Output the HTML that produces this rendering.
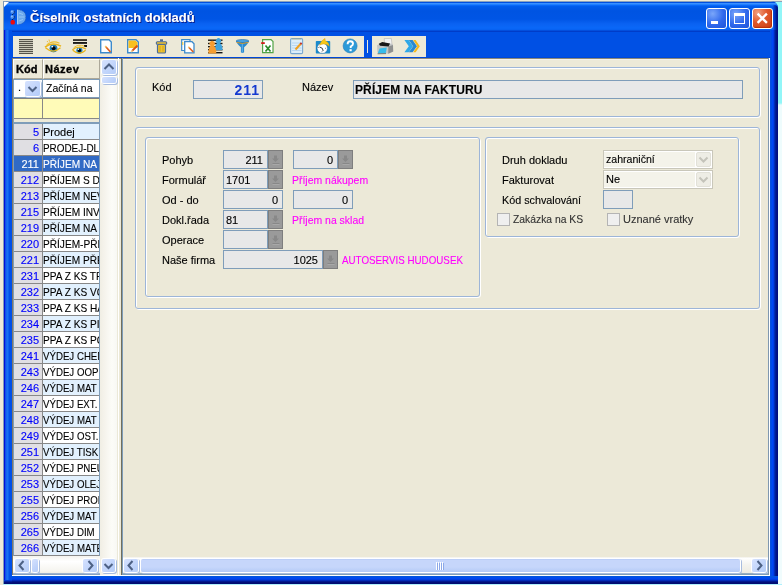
<!DOCTYPE html>
<html><head><meta charset="utf-8">
<style>
*{margin:0;padding:0;box-sizing:border-box}
html,body{will-change:transform;-webkit-text-stroke:0.12px currentColor;width:782px;height:585px;overflow:hidden;background:#ECE9D8;font-family:"Liberation Sans",sans-serif;font-size:11px;color:#000;position:relative}
.a{position:absolute}
#cyan{left:773px;top:1px;width:9px;height:584px;background:linear-gradient(#8AA2BC 0px,#8AA2BC 1px,#92F6F8 1px,#92F6F8 102px,#EEFCFD 104px,#F0FCFD 100%)}
#cyanb{left:3px;top:584px;width:779px;height:1px;background:#B0F0FC}
#topline{left:3px;top:1px;width:779px;height:1px;background:#8AA2BC}
#win{left:3px;top:1px;width:775px;height:583px;background:#0050E4;border-radius:6px 7px 0 0;overflow:hidden}
#title{left:0;top:0;width:775px;height:31px;
 background:linear-gradient(#8AA2BC 0px,#8AA2BC 1px,#0050E0 1px,#0050E0 2px,#3A90FF 2px,#3A90FF 3px,#2080FF 3px,#2080FF 4px,#0868F8 4px,#0868F8 5px,#005EEE 5px,#0058E8 7px,#0054E2 10px,#0055E5 18px,#0A62F2 23px,#0A68F8 27px,#0660F0 29px,#003CC8 30px,#003CC8 31px)}
#lb{left:3px;top:30px;width:9px;height:554px;z-index:1;background:linear-gradient(90deg,#8898C0 0px,#8898C0 1px,#0010D8 1px,#0010D8 2px,#1040E0 2px,#1060F0 3px,#1870F0 4.5px,#0A60F0 5.5px,#0050E8 6.5px,#0050E8 9px)}
#rb{left:770px;top:30px;width:8px;height:554px;background:linear-gradient(90deg,#1050E0 0px,#0050E0 1px,#0048F0 2px,#0044F8 3px,#0038D0 4px,#0020A0 5px,#001890 6px,#000C80 7px,#000C80 8px)}
#bb{left:12px;top:576px;width:766px;height:8px;background:linear-gradient(#0058E0 0px,#0050E0 1px,#0048F0 2px,#0044F0 3px,#0038D0 4px,#0020A0 5px,#001080 6px,#000C70 7px,#000C70 8px)}
#ttext{left:30px;top:10px;color:#fff;font-weight:bold;font-size:13px;white-space:nowrap;text-shadow:1px 1px 0 #0A1E8A;letter-spacing:0px}
.tbtn{top:8px;width:21px;height:21px;border:1px solid #fff;border-radius:3px;background:radial-gradient(circle at 30% 25%,#7AA6FA,#2F68EC 55%,#1E54D8)}
#bclose{background:radial-gradient(circle at 25% 20%,#F0A080,#E0582A 45%,#C83C12);box-shadow:inset -1px -1px 1px #B83008}
.tband{top:36px;height:21px;background:#ECE9D8}
#grip{left:367px;top:40px;width:1px;height:13px;background:#ECE9D8}
/* grid */
.hd{-webkit-text-stroke:0.35px #000;top:59px;height:20px;background:#ECE9D8;border-top:1px solid #fff;border-left:1px solid #fff;border-bottom:1px solid #ACA899;border-right:1px solid #ACA899;font-weight:bold;padding:3px 0 0 3px;line-height:13px}
.gr{left:13px;width:87px;height:16px;border-bottom:1px solid #888;border-left:1px solid #7F9DB9}
.gk{left:0;top:0;width:29px;height:15px;background:#E0DFE3;color:#0000FF;text-align:right;padding-right:3px;line-height:17px;border-right:1px solid #888}
.gn{left:29px;top:0;width:57px;height:15px;line-height:17px;padding-left:0px;white-space:nowrap;overflow:hidden}
.gr.b .gn{background:#E2F1FE}
.gr.w .gn{background:#fff}
.gr.sel .gk,.gr.sel .gn{background:#316AC5;color:#fff}
.sbtn{border-radius:2px;background:linear-gradient(135deg,#D6E2FE,#C2D5FB 55%,#B4CCF8);box-shadow:0 0 0 1px #fff,1px 1px 0 1px #A8BCDF}
/* form */
.gb{border:1px solid #9DB5D8;border-radius:3px}
.gbw{border:1px solid #fff;border-radius:3px}
.lbl{white-space:nowrap;line-height:13px}
.ed{height:19px;background:#E8E8E8;border:1px solid #7F9DB9;line-height:19px;padding:0 4px;white-space:nowrap;overflow:hidden}
.edb{height:19px;background:#9A9A9A;border:1px solid #7E7E7E}
.edb svg{position:absolute;left:0;top:0}
.mag{color:#FF00FF;white-space:nowrap;line-height:13px}
.cb{height:19px;background:#F4F3EA;border:1px solid #C9C7BA;line-height:17px;padding:0 2px;white-space:nowrap;box-shadow:inset -1px 0 0 #fff,inset 0 1px 0 #fff,inset 0 -1px 0 #fff}
.cbb{position:absolute;right:0px;top:1px;width:17px;height:15px;background:#fff;padding:0 1px 0 1px}
.cbb div{width:15px;height:15px;border:1px solid #E2E1D8;border-radius:2px;background:#EEEDE5}
.chk{width:13px;height:13px;border:1px solid #B4B4B4;background:#EFEFEF}

.u{display:inline-block;transform:scaleX(.92);transform-origin:0 50%}
.m{display:inline-block;transform:scaleX(.95);transform-origin:0 50%}
.mr{display:inline-block;transform:scaleX(.95);transform-origin:100% 50%}

</style></head><body>
<div class="a" id="cyan"></div>
<div class="a" id="cyanb"></div>
<div class="a" id="topline"></div>
<div class="a" id="win">
  <div class="a" id="title"></div>
</div>
<div class="a" id="lb"></div>
<div class="a" id="rb"></div>
<div class="a" style="left:770px;top:5px;width:8px;height:25px;background:linear-gradient(90deg,rgba(0,0,0,0) 0px,rgba(0,0,0,0) 3px,rgba(0,40,180,0.5) 4px,rgba(0,20,140,0.8) 6px,rgba(0,12,128,0.95) 7px);border-top-right-radius:4px"></div>
<div class="a" id="bb"></div>
<div class="a" style="left:4px;top:580px;width:8px;height:4px;z-index:2;background:linear-gradient(#0038D0 0px,#0038D0 1px,#0020A0 1px,#0020A0 2px,#001080 2px,#001080 3px,#000C70 3px)"></div>
<svg class="a" style="left:3px;top:1px" width="8" height="8"><path d="M1 1 H6 L1 6Z" fill="#fff"/></svg>
<div class="a" style="left:3px;top:1px;width:1px;height:583px;background:#7E9AB8;z-index:3"></div>
<div class="a" id="ttext">Číselník ostatních dokladů</div>
<div class="a tbtn" style="left:706px"></div>
<div class="a tbtn" style="left:729px"></div>
<div class="a tbtn" id="bclose" style="left:752px"></div>
<svg class="a" style="left:0;top:0" width="782" height="32">
<rect x="711" y="21" width="7" height="3" fill="#fff"/>
<path d="M734 13 H745 V24 H734Z M735 16 V23 H744 V16Z" fill="#fff" fill-rule="evenodd"/>
<path d="M757.6 13.6 L766.9 22.9 M766.9 13.6 L757.6 22.9" stroke="#fff" stroke-width="2.3"/>
<g>
<circle cx="12.4" cy="12" r="2.1" fill="#4A8CEC"/><circle cx="11.9" cy="11.4" r="0.9" fill="#8EC0FF"/>
<path d="M14.3 11 Q14.8 12.5 13.5 14" stroke="#102050" stroke-width="0.7" fill="none"/>
<circle cx="12.4" cy="17" r="2.1" fill="#4A8CEC"/><circle cx="11.9" cy="16.4" r="0.9" fill="#8EC0FF"/>
<path d="M14.3 16 Q14.8 17.5 13.5 19" stroke="#102050" stroke-width="0.7" fill="none"/>
<path d="M12 14.3 L13 14.8 M12 19.3 L13 19.8" stroke="#101830" stroke-width="0.8"/>
<rect x="10.6" y="20" width="4.3" height="4.5" rx="1.6" fill="#F00A0A"/>
<path d="M17.3 9.5 Q25.8 10 25.8 17 Q25.8 24.2 17.3 24.6Z" fill="#6CA8EC"/>
<path d="M17.3 9.5 Q25.8 10 25.8 17 Q25.8 24.2 17.3 24.6" fill="none" stroke="#3460A8" stroke-width="0.8" stroke-dasharray="1.2 1.3"/>
<path d="M17.6 9.8 V24.3" stroke="#A8D0FA" stroke-width="1"/>
<path d="M19 13 L23 14.5 M19 17 L24.5 17 M19 21 L23 19.5" stroke="#9ACAF8" stroke-width="0.9"/>
</g>
</svg>

<div class="a tband" style="left:13px;width:351px"></div>
<div class="a tband" style="left:372px;width:54px"></div>
<div class="a" id="grip"></div>
<svg class="a" style="left:0;top:0" width="440" height="58" viewBox="0 0 440 58" shape-rendering="auto">
<!-- 1 lines -->
<g fill="#55534A" shape-rendering="crispEdges"><rect x="19" y="39" width="14" height="1"/><rect x="19" y="41" width="14" height="1"/><rect x="19" y="43" width="14" height="1"/><rect x="19" y="45" width="14" height="1"/><rect x="19" y="47" width="14" height="1"/><rect x="19" y="49" width="14" height="1"/><rect x="19" y="51" width="14" height="1"/><rect x="19" y="53" width="14" height="1"/></g>
<g fill="#A8A698" shape-rendering="crispEdges" opacity="0.5"><rect x="19" y="40" width="14" height="1"/><rect x="19" y="42" width="14" height="1"/><rect x="19" y="44" width="14" height="1"/><rect x="19" y="46" width="14" height="1"/><rect x="19" y="48" width="14" height="1"/><rect x="19" y="50" width="14" height="1"/><rect x="19" y="52" width="14" height="1"/></g>
<!-- 2 eye -->
<g>
<path d="M45.5 47.5 Q53 43.5 60.5 47.5 Q53 53 45.5 47.5Z" fill="#F0EEE2"/>
<circle cx="53.5" cy="48.4" r="3.7" fill="#2A86B6"/><circle cx="53.5" cy="48.4" r="3.7" fill="none" stroke="#1A6A98" stroke-width="0.5"/>
<circle cx="53.6" cy="48.3" r="2" fill="#050508"/><circle cx="52.3" cy="46.6" r="0.9" fill="#fff"/>
<path d="M45 47.2 Q52 41.5 61 46.2" fill="none" stroke="#E8B41A" stroke-width="1.5"/>
<path d="M46.5 45.3 Q52 39.8 59.5 43.2" fill="none" stroke="#EEC030" stroke-width="1.1"/>
<path d="M49.5 41.6 L49 39.5 M48 42.3 L47 41" stroke="#E8B41A" stroke-width="0.8"/>
<path d="M45.5 47.8 Q53 54.5 60.5 47.8" fill="none" stroke="#E8B41A" stroke-width="1.3"/>
</g>
<!-- 3 eye + lines -->
<g>
<rect x="73" y="39.2" width="14" height="1.7" fill="#1E1E1E"/><rect x="73" y="42.1" width="14" height="1.7" fill="#050505"/><rect x="84" y="45" width="3" height="2" fill="#101010" shape-rendering="crispEdges"/>
<path d="M72.8 50 Q79.3 46.5 85.6 50 Q79.3 55 72.8 50Z" fill="#F0EEE2"/>
<circle cx="79.4" cy="50.6" r="3.1" fill="#2A86B6"/><circle cx="79.4" cy="50.5" r="1.7" fill="#050508"/><circle cx="78.4" cy="49.2" r="0.7" fill="#fff"/>
<path d="M72.4 49.7 Q78.5 45 86 49" fill="none" stroke="#E8B41A" stroke-width="1.4"/>
<path d="M73.6 47.8 Q78.5 43.5 84.5 46.3" fill="none" stroke="#EEC030" stroke-width="1"/>
<path d="M72.8 50.3 Q79.3 56.2 85.6 50.3" fill="none" stroke="#E8B41A" stroke-width="1.2"/>
</g>
<!-- 4 new doc -->
<g>
<path d="M100.7 39.7 H109 L111.3 42 V52.8 H100.7Z" fill="#fff" stroke="#3C8ACC" stroke-width="1.4"/>
<path d="M106 47 L110.5 52" stroke="#E06020" stroke-width="1.8"/><path d="M105.2 46.2 L106.4 47.4" stroke="#F0C060" stroke-width="1.8"/>
</g>
<!-- 5 edit doc -->
<g>
<path d="M127.7 39.7 H136 L138.3 42 V52.8 H127.7Z" fill="#fff" stroke="#3C8ACC" stroke-width="1.4"/>
<path d="M128.5 40.5 H135.5 L137.5 42.5 V48 H128.5Z" fill="#F8C020"/>
<path d="M132 51 L137.5 45.5" stroke="#D85018" stroke-width="1.8"/><path d="M131 52 L132.5 50.5" stroke="#F0D090" stroke-width="1.5"/>
</g>
<!-- 6 trash -->
<g>
<rect x="157.5" y="44.5" width="8" height="8.5" rx="1" fill="#F2C42C" stroke="#4A6A98" stroke-width="1.2"/>
<rect x="156.3" y="41.7" width="10.4" height="2.6" rx="1" fill="#F2C42C" stroke="#4A6A98" stroke-width="1.1"/>
<rect x="160" y="39.3" width="3" height="2" fill="#4A6A98"/>
<path d="M160 46 V51.5 M163 46 V51.5" stroke="#C89A20" stroke-width="0.8"/>
</g>
<!-- 7 copy doc -->
<g>
<path d="M181.7 39.7 H190 V50.5 H181.7Z" fill="#fff" stroke="#3C8ACC" stroke-width="1.2"/>
<rect x="182.3" y="42" width="1" height="3" fill="#F0C020"/>
<path d="M184.7 41.7 H192 L194 43.7 V52.8 H184.7Z" fill="#fff" stroke="#3C8ACC" stroke-width="1.3"/>
<path d="M189 47.5 L193.3 52" stroke="#E06020" stroke-width="1.7"/><path d="M188.3 46.8 L189.3 47.8" stroke="#F0C060" stroke-width="1.6"/>
</g>
<!-- 8 people lines -->
<g>
<g fill="#141414"><rect x="208" y="39.5" width="14.5" height="1.4"/><rect x="208" y="42.8" width="14.5" height="1.4"/><rect x="208" y="46" width="14.5" height="1.4"/><rect x="208" y="49" width="14.5" height="1.4"/><rect x="208" y="52" width="14.5" height="1.4"/></g>
<path d="M215 50 Q215 45 217 43 A2.6 2.6 0 1 1 220 43 Q222.5 45 222.5 50Z" fill="#3EA2DC"/>
<path d="M208.3 53.5 Q208.5 47.5 210.5 45.5 A2.6 2.6 0 1 1 213.8 45.5 Q216.3 47.5 216.3 53.5Z" fill="#F49C30"/>
</g>
<!-- 9 funnel -->
<g>
<path d="M236 41 Q236.5 43.5 240.9 47.2 V52.3 Q242.5 53.6 244.1 52.3 V47.2 Q248.5 43.5 249 41Z" fill="#2A8AD0"/>
<path d="M242.3 43.5 V52.5" stroke="#6CB8EC" stroke-width="0.9"/>
<ellipse cx="242.5" cy="41" rx="6.4" ry="1.5" fill="#4AA2E0" stroke="#1E6AAC" stroke-width="0.6"/>
<path d="M236.6 42.4 Q242.5 44.6 248.4 42.4" fill="none" stroke="#D89A28" stroke-width="1"/>
</g>
<!-- 10 excel -->
<g>
<path d="M262.6 39.6 H271 L273 41.6 V52.6 H262.6Z" fill="#fff" stroke="#52A448" stroke-width="1.2"/>
<rect x="261.2" y="42.2" width="3.6" height="1.8" fill="#D01818"/>
<path d="M265.5 45.5 L270.5 51.5 M270.5 45.5 L265.5 51.5" stroke="#2A8A2A" stroke-width="1.7"/>
</g>
<!-- 11 notepad -->
<g>
<rect x="290.6" y="38.6" width="12" height="15" rx="1.2" fill="#DCEEFA" stroke="#7AA8D0" stroke-width="1.1"/>
<path d="M292 43 H301.5 M292 45.5 H301.5 M292 48 H301.5 M292 50.5 H301.5" stroke="#A8CCEC" stroke-width="0.7"/>
<path d="M292.5 39 H301" stroke="#C8A040" stroke-width="0.9" stroke-dasharray="1 1"/>
<path d="M295.5 49.5 L301 43.5" stroke="#F0A020" stroke-width="2"/><path d="M300.4 44.1 L301.6 42.9" stroke="#C03030" stroke-width="2"/>
</g>
<!-- 12 clock -->
<g>
<rect x="315.8" y="41" width="14.4" height="12.5" rx="0.8" fill="#1A8ACC"/>
<circle cx="322.3" cy="48.3" r="5.2" fill="#fff" stroke="#0E5E98" stroke-width="0.5"/>
<path d="M322.3 48.3 L319.6 47 M322.3 48.3 L323.2 51" stroke="#202830" stroke-width="0.9"/>
<path d="M318.3 47.5 h0.8 M322 52.2 v-0.8 M326 48.3 h-0.8" stroke="#404850" stroke-width="0.8"/>
<path d="M319.5 45.2 Q320.8 40.6 325 38.4 L325.2 40.8 Q328.6 41.6 329.3 46.2 L326.8 44.6 Q323.6 43 319.5 45.2Z" fill="#F8C818" stroke="#D09808" stroke-width="0.4"/>
</g>
<!-- 13 help -->
<g>
<circle cx="350.1" cy="45.9" r="7" fill="#2C9AD8"/>
<circle cx="350.1" cy="45.9" r="7" fill="none" stroke="#1C78B8" stroke-width="0.6"/>
<path d="M347.6 44.2 Q347.6 41.2 350.3 41.2 Q353 41.2 353 43.7 Q353 45.2 350.7 46.5 V48" fill="none" stroke="#fff" stroke-width="1.9"/>
<rect x="349.5" y="49.2" width="2.2" height="2" fill="#fff"/>
</g>
<!-- 14 printer -->
<g>
<path d="M384.2 38.6 L391.3 38.4 L392 44.3 L384.6 44.6Z" fill="#F2F2F2" stroke="#A8A8A8" stroke-width="0.5"/>
<path d="M377 45.3 L381.5 42.6 L392.8 44 L393.2 51.4 L388.3 53.8 L377.4 52.4Z" fill="#C4C6C6"/>
<path d="M388.3 46.5 L393 45 L393.2 51.4 L388.3 53.8Z" fill="#8E9090"/>
<path d="M378.8 43.8 L382.3 42 L390 43.6 L388.6 46.4 L380 45.8Z" fill="#181818"/>
<path d="M379.6 48.4 L386.8 47.6 L385.8 53.2 L377.6 53.6Z" fill="#36BCEC"/>
<path d="M377.6 53.8 L386 53.6" stroke="#505050" stroke-width="0.7"/>
</g>
<!-- 15 chevrons -->
<g>
<path d="M404.4 40 H408.6 L413 46.2 L408.6 52.3 H404.4 L408.8 46.2Z" fill="#2EA8E8"/>
<path d="M408.8 40 H412.6 L417 46.2 L412.6 52.3 H408.8 L413.2 46.2Z" fill="#2A88D0"/>
<path d="M413.2 40 H415.6 L419.8 46.2 L415.6 52.3 H413.2 L417.4 46.2Z" fill="#F8B818"/>
</g>
</svg>


<!-- client -->
<div class="a" style="left:12px;top:57px;width:759px;height:1px;background:#0048D8"></div>
<div class="a" style="left:12px;top:58px;width:758px;height:518px;background:#ECE9D8"></div>
<div class="a" style="left:12px;top:58px;width:758px;height:1px;background:#8C8A7A"></div>
<div class="a" style="left:13px;top:59px;width:757px;height:1px;background:#F4F2EA"></div>
<div class="a" style="left:12px;top:58px;width:1px;height:518px;background:#80786A"></div>

<!-- left grid -->
<div class="a hd" style="left:13px;width:30px;padding-left:2px">Kód</div>
<div class="a hd" style="left:43px;width:57px;padding-left:1px;letter-spacing:0.5px">Název</div>
<div class="a" style="left:13px;top:79px;width:87px;height:19px;background:#7F9DB9"></div>
<div class="a" style="left:14px;top:80px;width:28px;height:17px;background:#fff"></div>
<div class="a" style="left:43px;top:80px;width:56px;height:17px;background:#fff;padding:2px 0 0 3px;line-height:13px;white-space:nowrap;overflow:hidden"><span class="m">Začíná na</span></div>
<div class="a" style="left:18px;top:81px;line-height:13px">.</div>
<div class="a sbtn" style="left:25px;top:81px;width:15px;height:15px"></div>
<div class="a" style="left:13px;top:98px;width:87px;height:1px;background:#808080"></div>
<div class="a" style="left:13px;top:99px;width:87px;height:20px;background:#FFFBB8;border-bottom:1px solid #888"></div>
<div class="a" style="left:42px;top:99px;width:1px;height:19px;background:#888"></div>
<div class="a" style="left:13px;top:122px;width:87px;height:2px;background:#7F9DB9"></div>
<div class="a gr b" style="top:124px"><div class="a gk">5</div><div class="a gn">Prodej</div></div>
<div class="a gr w" style="top:140px"><div class="a gk">6</div><div class="a gn"><span class="u" style="transform:scaleX(.9)">PRODEJ-DL</span></div></div>
<div class="a gr sel" style="top:156px"><div class="a gk">211</div><div class="a gn"><span class="u" style="transform:scaleX(.92)">PŘÍJEM NA FAKTURU</span></div></div>
<div class="a gr w" style="top:172px"><div class="a gk">212</div><div class="a gn"><span class="u" style="transform:scaleX(.92)">PŘÍJEM S DL</span></div></div>
<div class="a gr b" style="top:188px"><div class="a gk">213</div><div class="a gn"><span class="u" style="transform:scaleX(.92)">PŘÍJEM NEVYF</span></div></div>
<div class="a gr w" style="top:204px"><div class="a gk">215</div><div class="a gn"><span class="u" style="transform:scaleX(.92)">PŘÍJEM INV</span></div></div>
<div class="a gr b" style="top:220px"><div class="a gk">219</div><div class="a gn"><span class="u" style="transform:scaleX(.92)">PŘÍJEM NA SKLAD</span></div></div>
<div class="a gr w" style="top:236px"><div class="a gk">220</div><div class="a gn"><span class="u" style="transform:scaleX(.92)">PŘÍJEM-PŘEVOD</span></div></div>
<div class="a gr b" style="top:252px"><div class="a gk">221</div><div class="a gn"><span class="u" style="transform:scaleX(.92)">PŘÍJEM PŘEVOD</span></div></div>
<div class="a gr w" style="top:268px"><div class="a gk">231</div><div class="a gn"><span class="u" style="transform:scaleX(.92)">PPA Z KS TR</span></div></div>
<div class="a gr b" style="top:284px"><div class="a gk">232</div><div class="a gn"><span class="u" style="transform:scaleX(.92)">PPA Z KS VO</span></div></div>
<div class="a gr w" style="top:300px"><div class="a gk">233</div><div class="a gn"><span class="u" style="transform:scaleX(.92)">PPA Z KS HA</span></div></div>
<div class="a gr b" style="top:316px"><div class="a gk">234</div><div class="a gn"><span class="u" style="transform:scaleX(.92)">PPA Z KS PI</span></div></div>
<div class="a gr w" style="top:332px"><div class="a gk">235</div><div class="a gn"><span class="u" style="transform:scaleX(.92)">PPA Z KS PO</span></div></div>
<div class="a gr b" style="top:348px"><div class="a gk">241</div><div class="a gn"><span class="u" style="transform:scaleX(.88)">VÝDEJ CHEM</span></div></div>
<div class="a gr w" style="top:364px"><div class="a gk">243</div><div class="a gn"><span class="u" style="transform:scaleX(.88)">VÝDEJ OOP</span></div></div>
<div class="a gr b" style="top:380px"><div class="a gk">246</div><div class="a gn"><span class="u" style="transform:scaleX(.88)">VÝDEJ MAT </span></div></div>
<div class="a gr w" style="top:396px"><div class="a gk">247</div><div class="a gn"><span class="u" style="transform:scaleX(.88)">VÝDEJ EXT.</span></div></div>
<div class="a gr b" style="top:412px"><div class="a gk">248</div><div class="a gn"><span class="u" style="transform:scaleX(.88)">VÝDEJ MAT </span></div></div>
<div class="a gr w" style="top:428px"><div class="a gk">249</div><div class="a gn"><span class="u" style="transform:scaleX(.88)">VÝDEJ OST.</span></div></div>
<div class="a gr b" style="top:444px"><div class="a gk">251</div><div class="a gn"><span class="u" style="transform:scaleX(.88)">VÝDEJ TISK</span></div></div>
<div class="a gr w" style="top:460px"><div class="a gk">252</div><div class="a gn"><span class="u" style="transform:scaleX(.88)">VÝDEJ PNEU</span></div></div>
<div class="a gr b" style="top:476px"><div class="a gk">253</div><div class="a gn"><span class="u" style="transform:scaleX(.88)">VÝDEJ OLEJ</span></div></div>
<div class="a gr w" style="top:492px"><div class="a gk">255</div><div class="a gn"><span class="u" style="transform:scaleX(.88)">VÝDEJ PROD</span></div></div>
<div class="a gr b" style="top:508px"><div class="a gk">256</div><div class="a gn"><span class="u" style="transform:scaleX(.88)">VÝDEJ MAT </span></div></div>
<div class="a gr w" style="top:524px"><div class="a gk">265</div><div class="a gn"><span class="u" style="transform:scaleX(.88)">VÝDEJ DIM</span></div></div>
<div class="a gr b" style="top:540px"><div class="a gk">266</div><div class="a gn"><span class="u" style="transform:scaleX(.88)">VÝDEJ MATE</span></div></div>
<div class="a" style="left:13px;top:79px;width:1px;height:477px;background:#7F9DB9"></div>
<div class="a" style="left:99px;top:79px;width:1px;height:477px;background:#7F9DB9"></div>
<!-- vertical scrollbar -->
<div class="a" style="left:100px;top:59px;width:17px;height:516px;background:linear-gradient(90deg,#F0EEE4,#F4F2EA 20%,#FCFCF8 70%,#F8F8F4)"></div>
<div class="a sbtn" style="left:102px;top:60px;width:14px;height:14px"></div>
<svg class="a" style="left:102px;top:60px" width="14" height="14"><path d="M2.5 9 L7 4.5 L11.5 9" stroke="#4D6185" stroke-width="2" fill="none"/></svg>
<div class="a sbtn" style="left:102px;top:77px;width:14px;height:6px"></div>
<div class="a sbtn" style="left:102px;top:559px;width:13px;height:13px"></div>
<svg class="a" style="left:102px;top:559px" width="14" height="14"><path d="M2.5 5 L6.5 9 L10.5 5" stroke="#4D6185" stroke-width="2" fill="none"/></svg>
<svg class="a" style="left:25px;top:81px" width="15" height="15"><path d="M3.5 6 L7.5 10 L11.5 6" stroke="#4D6185" stroke-width="2" fill="none"/></svg>
<!-- hscroll grid -->
<div class="a" style="left:13px;top:556px;width:87px;height:18px;background:linear-gradient(#F4F3EE,#FFFFFF 30%,#F6F5F0 80%,#EDEBE2)"></div>
<div class="a" style="left:13px;top:573px;width:87px;height:2px;background:linear-gradient(#A8BCD8,#7F9AB6)"></div>
<div class="a sbtn" style="left:15px;top:559px;width:14px;height:13px"></div>
<svg class="a" style="left:15px;top:559px" width="14" height="13"><path d="M8.5 2 L4.5 6.5 L8.5 11" stroke="#4D6185" stroke-width="2" fill="none"/></svg>
<div class="a sbtn" style="left:32px;top:559px;width:6px;height:13px"></div>
<div class="a sbtn" style="left:83px;top:559px;width:14px;height:13px"></div>
<svg class="a" style="left:83px;top:559px" width="14" height="13"><path d="M5.5 2 L9.5 6.5 L5.5 11" stroke="#4D6185" stroke-width="2" fill="none"/></svg>

<!-- splitter -->
<div class="a" style="left:118px;top:58px;width:1px;height:518px;background:#fff"></div>
<div class="a" style="left:121px;top:58px;width:1px;height:518px;background:#707060"></div>
<div class="a" style="left:122px;top:58px;width:1px;height:518px;background:#7F9DB9"></div>

<!-- right border lines -->
<div class="a" style="left:768px;top:58px;width:1px;height:518px;background:#8098B0"></div>
<div class="a" style="left:769px;top:58px;width:1px;height:518px;background:#fff"></div>
<div class="a" style="left:12px;top:575px;width:758px;height:1px;background:#fff"></div>
<div class="a" style="left:123px;top:573px;width:645px;height:2px;background:linear-gradient(#A0B4C8,#7898B0)"></div>

<!-- form hscroll -->
<div class="a" style="left:123px;top:557px;width:645px;height:16px;background:linear-gradient(#ECEAE0 0px,#FFFFFF 1px,#F4F3EE 50%,#EDEBE2)"></div>
<div class="a sbtn" style="left:124px;top:559px;width:14px;height:13px"></div>
<svg class="a" style="left:124px;top:559px" width="14" height="13"><path d="M8.5 2 L4.5 6.5 L8.5 11" stroke="#4D6185" stroke-width="2" fill="none"/></svg>
<div class="a sbtn" style="left:141px;top:559px;width:599px;height:13px;background:linear-gradient(#B6CAF6 0px,#C6D6FB 1.5px,#C6D6FB 8px,#B4CAF6 13px)"></div>
<svg class="a" style="left:436px;top:562px" width="9" height="8"><path d="M0.5 0 V8 M2.5 0 V8 M4.5 0 V8 M6.5 0 V8" stroke="#fff" stroke-width="1"/><path d="M1.5 1 V8 M3.5 1 V8 M5.5 1 V8 M7.5 1 V8" stroke="#8CA8E8" stroke-width="1"/></svg>
<div class="a sbtn" style="left:752px;top:559px;width:14px;height:13px"></div>
<svg class="a" style="left:752px;top:559px" width="14" height="13"><path d="M5.5 2 L9.5 6.5 L5.5 11" stroke="#4D6185" stroke-width="2" fill="none"/></svg>

<!-- group boxes -->
<div class="a gbw" style="left:136px;top:68px;width:625px;height:50px"></div>
<div class="a gb" style="left:135px;top:67px;width:625px;height:50px"></div>
<div class="a lbl" style="left:152px;top:81px">Kód</div>
<div class="a ed" style="left:193px;top:80px;width:70px;text-align:right;font-weight:bold;font-size:14px;color:#1438D0;padding-right:2px;letter-spacing:1.0px;line-height:19px;-webkit-text-stroke:0">211</div>
<div class="a lbl" style="left:302px;top:81px">Název</div>
<div class="a ed" style="left:353px;top:80px;width:390px;font-weight:bold;font-size:12px;padding-left:1px;line-height:19px;letter-spacing:0.12px">PŘÍJEM NA FAKTURU</div>

<div class="a gbw" style="left:136px;top:128px;width:625px;height:182px"></div>
<div class="a gb" style="left:135px;top:127px;width:625px;height:182px"></div>

<div class="a gbw" style="left:146px;top:138px;width:335px;height:160px"></div>
<div class="a gb" style="left:145px;top:137px;width:335px;height:160px"></div>

<div class="a gbw" style="left:486px;top:138px;width:254px;height:100px"></div>
<div class="a gb" style="left:485px;top:137px;width:254px;height:100px"></div>

<div class="a lbl" style="left:162px;top:154px">Pohyb</div>
<div class="a lbl" style="left:162px;top:174px">Formulář</div>
<div class="a lbl" style="left:162px;top:194px">Od - do</div>
<div class="a lbl" style="left:162px;top:214px">Dokl.řada</div>
<div class="a lbl" style="left:162px;top:234px">Operace</div>
<div class="a lbl" style="left:162px;top:254px">Naše firma</div>

<div class="a ed" style="left:223px;top:150px;width:45px;text-align:right">211</div>
<div class="a edb" style="left:268px;top:150px;width:15px"><svg width="15" height="19"><path d="M5 4.5 H8 V7.5 H10 L6.5 11 L3 7.5 H5Z" fill="#888"/><rect x="3.5" y="12" width="7" height="1" fill="#888"/><rect x="3.5" y="13" width="7" height="1" fill="#A8A8A8"/></svg></div>
<div class="a ed" style="left:293px;top:150px;width:45px;text-align:right">0</div>
<div class="a edb" style="left:338px;top:150px;width:15px"><svg width="15" height="19"><path d="M5 4.5 H8 V7.5 H10 L6.5 11 L3 7.5 H5Z" fill="#888"/><rect x="3.5" y="12" width="7" height="1" fill="#888"/><rect x="3.5" y="13" width="7" height="1" fill="#A8A8A8"/></svg></div>

<div class="a ed" style="left:223px;top:170px;width:45px;padding-left:2px">1701</div>
<div class="a edb" style="left:268px;top:170px;width:15px"><svg width="15" height="19"><path d="M5 4.5 H8 V7.5 H10 L6.5 11 L3 7.5 H5Z" fill="#888"/><rect x="3.5" y="12" width="7" height="1" fill="#888"/><rect x="3.5" y="13" width="7" height="1" fill="#A8A8A8"/></svg></div>
<div class="a mag" style="left:292px;top:174px"><span class="m">Příjem nákupem</span></div>

<div class="a ed" style="left:223px;top:190px;width:60px;text-align:right">0</div>
<div class="a ed" style="left:293px;top:190px;width:60px;text-align:right">0</div>

<div class="a ed" style="left:223px;top:210px;width:45px;padding-left:2px">81</div>
<div class="a edb" style="left:268px;top:210px;width:15px"><svg width="15" height="19"><path d="M5 4.5 H8 V7.5 H10 L6.5 11 L3 7.5 H5Z" fill="#888"/><rect x="3.5" y="12" width="7" height="1" fill="#888"/><rect x="3.5" y="13" width="7" height="1" fill="#A8A8A8"/></svg></div>
<div class="a mag" style="left:292px;top:214px"><span class="m">Příjem na sklad</span></div>

<div class="a ed" style="left:223px;top:230px;width:45px"></div>
<div class="a edb" style="left:268px;top:230px;width:15px"><svg width="15" height="19"><path d="M5 4.5 H8 V7.5 H10 L6.5 11 L3 7.5 H5Z" fill="#888"/><rect x="3.5" y="12" width="7" height="1" fill="#888"/><rect x="3.5" y="13" width="7" height="1" fill="#A8A8A8"/></svg></div>

<div class="a ed" style="left:223px;top:250px;width:100px;text-align:right">1025</div>
<div class="a edb" style="left:323px;top:250px;width:15px"><svg width="15" height="19"><path d="M5 4.5 H8 V7.5 H10 L6.5 11 L3 7.5 H5Z" fill="#888"/><rect x="3.5" y="12" width="7" height="1" fill="#888"/><rect x="3.5" y="13" width="7" height="1" fill="#A8A8A8"/></svg></div>
<div class="a mag" style="left:342px;top:254px"><span class="a0" style="display:inline-block;transform:scaleX(.89);transform-origin:0 50%">AUTOSERVIS HUDOUSEK</span></div>

<div class="a lbl" style="left:502px;top:154px">Druh dokladu</div>
<div class="a lbl" style="left:502px;top:174px">Fakturovat</div>
<div class="a lbl" style="left:502px;top:194px"><span class="m" style="transform:scaleX(.98)">Kód schvalování</span></div>
<div class="a cb" style="left:603px;top:150px;width:110px"><span class="m" style="transform:scaleX(.96)">zahraniční</span><div class="cbb"><div><svg width="13" height="13" style="display:block"><path d="M2.5 4.5 L6.5 8.5 L10.5 4.5" fill="none" stroke="#C4C3BA" stroke-width="2"/></svg></div></div></div>
<div class="a cb" style="left:603px;top:170px;width:110px">Ne<div class="cbb"><div><svg width="13" height="13" style="display:block"><path d="M2.5 4.5 L6.5 8.5 L10.5 4.5" fill="none" stroke="#C4C3BA" stroke-width="2"/></svg></div></div></div>
<div class="a ed" style="left:603px;top:190px;width:30px"></div>
<div class="a chk" style="left:497px;top:213px"></div>
<div class="a lbl" style="left:513px;top:213px;color:#333"><span class="m" style="transform:scaleX(.94)">Zakázka na KS</span></div>
<div class="a chk" style="left:607px;top:213px"></div>
<div class="a lbl" style="left:623px;top:213px;color:#333">Uznané vratky</div>

</body></html>
